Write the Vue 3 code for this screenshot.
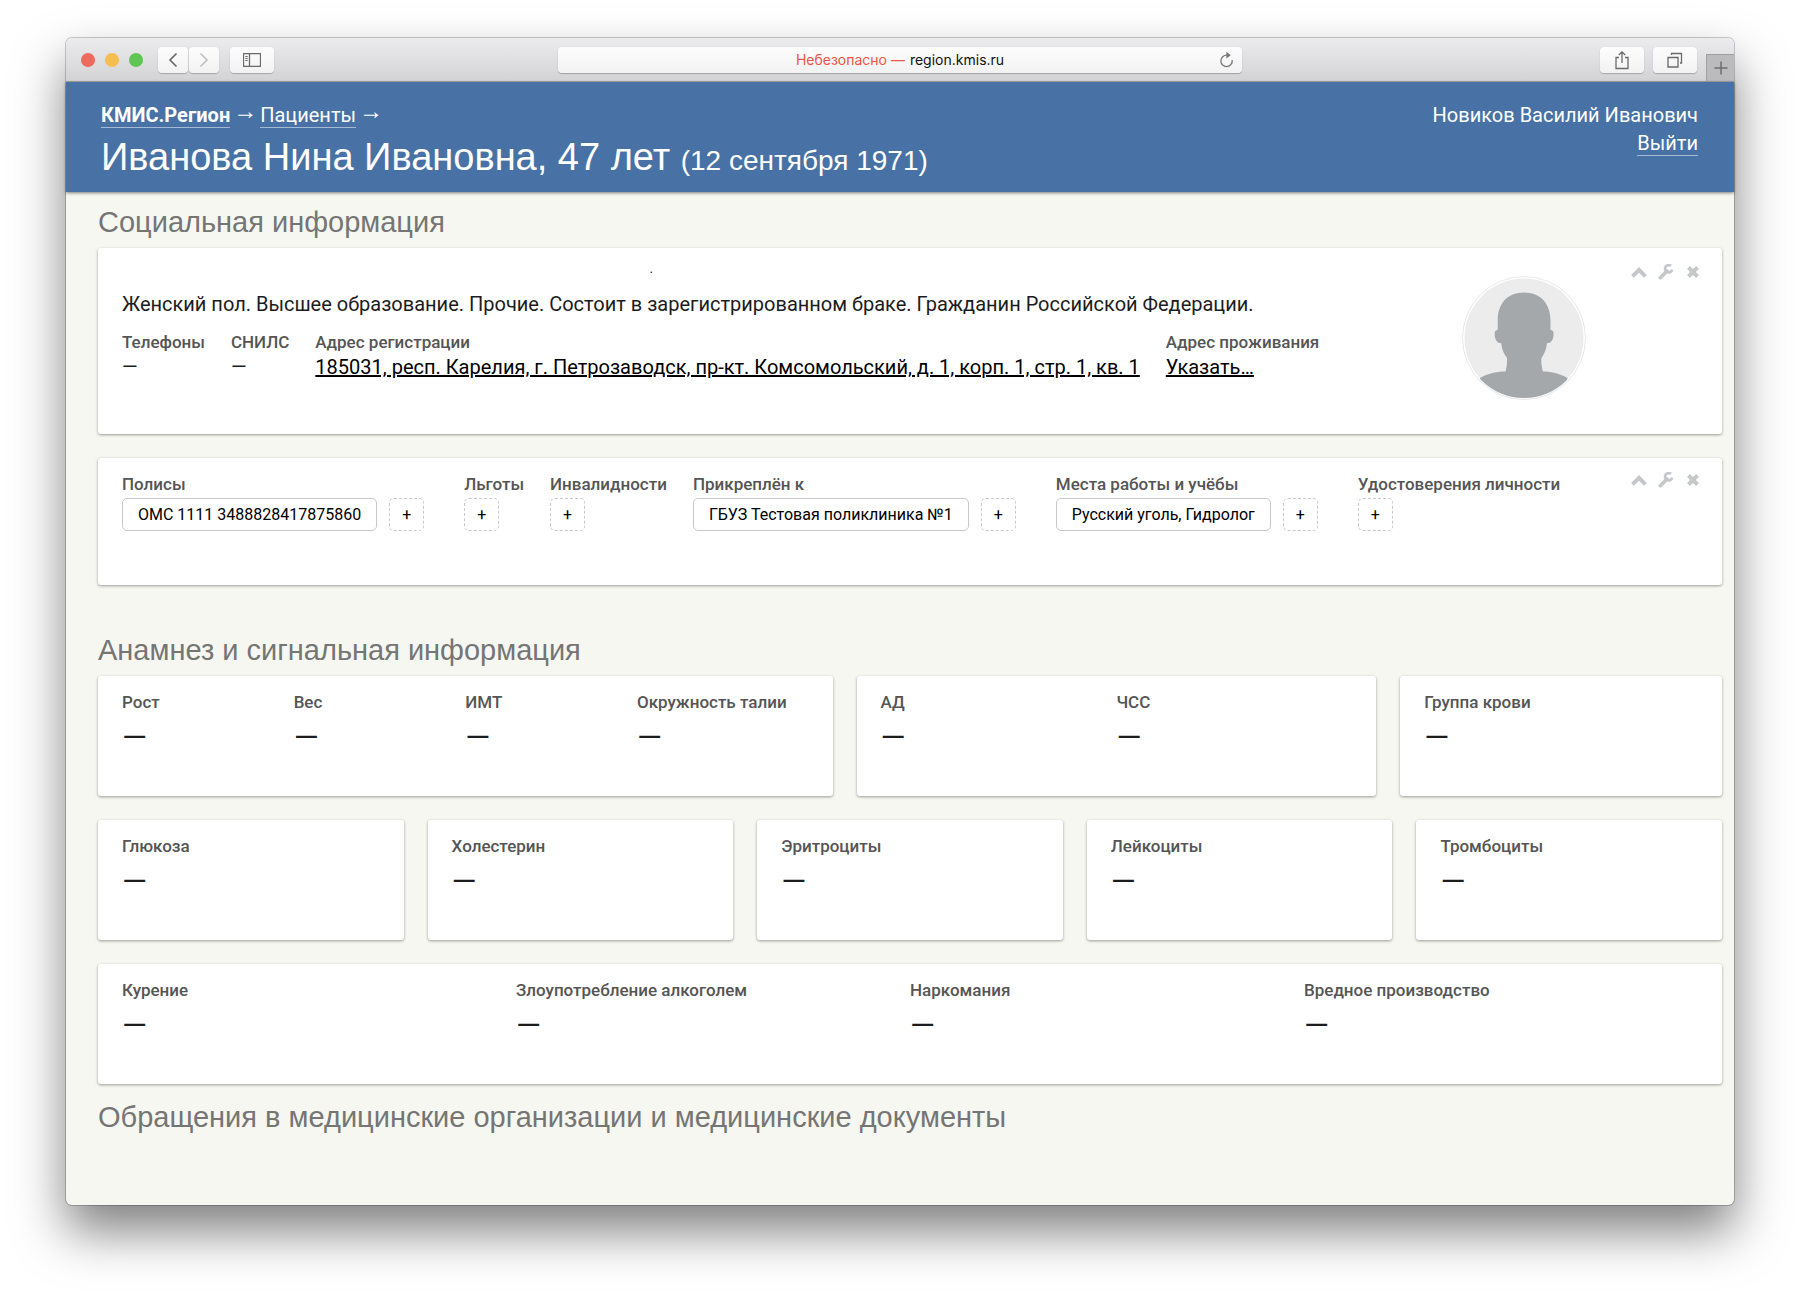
<script setup>
const personal = [
  { label: 'Телефоны', value: '—' },
  { label: 'СНИЛС', value: '—' },
  { label: 'Адрес регистрации', link: '185031, респ. Карелия, г. Петрозаводск, пр-кт. Комсомольский, д. 1, корп. 1, стр. 1, кв. 1' },
  { label: 'Адрес проживания', link: 'Указать…' },
]

const documents = [
  { label: 'Полисы', items: ['ОМС 1111 3488828417875860'] },
  { label: 'Льготы', items: [] },
  { label: 'Инвалидности', items: [] },
  { label: 'Прикреплён к', items: ['ГБУЗ Тестовая поликлиника №1'] },
  { label: 'Места работы и учёбы', items: ['Русский уголь, Гидролог'] },
  { label: 'Удостоверения личности', items: [] },
]

const metricRows = [
  { name: 'body', cards: [['Рост', 'Вес', 'ИМТ', 'Окружность талии'], ['АД', 'ЧСС'], ['Группа крови']] },
  { name: 'blood', cards: [['Глюкоза'], ['Холестерин'], ['Эритроциты'], ['Лейкоциты'], ['Тромбоциты']] },
  { name: 'habits', cards: [['Курение', 'Злоупотребление алкоголем', 'Наркомания', 'Вредное производство']] },
]

const tools = [
  { name: 'Свернуть', path: 'M1.500 12.300 8 5.800l6.500 6.500' },
  { name: 'Настроить', wrench: true },
  { name: 'Закрыть', path: 'M3.500 3.500l9 9M12.500 3.500l-9 9' },
]
</script>

<template>
  <div class="desktop">
    <div class="window">
      <div class="toolbar">
        <div class="bar-left">
          <div class="lights">
            <span class="light red"></span>
            <span class="light yellow"></span>
            <span class="light green"></span>
          </div>
          <div class="nav">
            <button class="tb narrow" aria-label="Назад">
              <svg width="12" height="16" viewBox="0 0 12 16"><path d="M9.500 1.500 3 8l6.500 6.500" fill="none" stroke="#666" stroke-width="1.600" /></svg>
            </button>
            <button class="tb narrow" aria-label="Вперёд">
              <svg width="12" height="16" viewBox="0 0 12 16"><path d="M2.500 1.500 9 8l-6.500 6.500" fill="none" stroke="#c0c0c0" stroke-width="1.600" /></svg>
            </button>
          </div>
          <button class="tb" aria-label="Боковое меню">
            <svg width="18" height="14" viewBox="0 0 18 14" fill="none" stroke="#6a6a6a">
              <path d="M.5 .5h17v13H.5zM6.500 .5v13" stroke-width="1.300" />
              <path d="M2.300 3.500h2.400M2.300 5.500h2.400M2.300 7.500h2.400" stroke-width="1" />
            </svg>
          </button>
        </div>
        <div class="address">
          <label class="url">
            <span class="warn">Небезопасно —</span>
            <input class="url-input" type="text" value="region.kmis.ru" size="12" />
          </label>
          <button class="reload" aria-label="Обновить">
            <svg width="16" height="18" viewBox="0 0 16 18">
              <path d="M8 4.200A5.700 5.700 0 1 0 13.200 9" fill="none" stroke="#777" stroke-width="1.300" />
              <path d="M7.400 .8 11.800 4.200 7.400 7.400z" fill="#777" />
            </svg>
          </button>
        </div>
        <div class="bar-right">
          <button class="tb" aria-label="Поделиться">
            <svg width="16" height="20" viewBox="0 0 16 20" fill="none" stroke="#6a6a6a" stroke-width="1.300">
              <path d="M5 7.500H2v11h12v-11h-3M8 13V2M4.800 5 8 1.800 11.200 5" />
            </svg>
          </button>
          <button class="tb" aria-label="Показать вкладки">
            <svg width="18" height="18" viewBox="0 0 18 18" fill="none" stroke="#6a6a6a" stroke-width="1.300">
              <path d="M2 6.500h10v9.500H2zM5.500 4V2.500h10V12H14" />
            </svg>
          </button>
          <button class="new-tab" aria-label="Новая вкладка">
            <svg width="14" height="14" viewBox="0 0 14 14"><path d="M7 .5v13M.5 7h13" stroke="#6e6e6e" stroke-width="1.500" /></svg>
          </button>
        </div>
      </div>

      <header class="header">
        <div>
          <nav class="crumbs">
            <a href="#" class="home">КМИС.Регион</a>
            <span class="arrow">→</span>
            <a href="#">Пациенты</a>
            <span class="arrow">→</span>
          </nav>
          <h1>Иванова Нина Ивановна, 47 лет <small>(12 сентября 1971)</small></h1>
        </div>
        <div class="user">
          <div>Новиков Василий Иванович</div>
          <a href="#">Выйти</a>
        </div>
      </header>

      <main class="content">
        <h2>Социальная информация</h2>
        <section class="card person">
          <div class="person-main">
            <div class="dot">.</div>
            <p>Женский пол. Высшее образование. Прочие. Состоит в зарегистрированном браке. Гражданин Российской Федерации.</p>
            <div class="fields">
              <div v-for="f in personal" :key="f.label">
                <div class="label">{{ f.label }}</div>
                <a v-if="f.link" href="#" class="value link">{{ f.link }}</a>
                <div v-else class="value">{{ f.value }}</div>
              </div>
            </div>
          </div>
          <svg class="avatar" width="124" height="124" viewBox="0 0 124 124">
            <defs><clipPath id="face"><circle cx="62" cy="62" r="60" /></clipPath></defs>
            <circle cx="62" cy="62" r="61.500" fill="#fff" stroke="#e6e8ea" />
            <circle cx="62" cy="62" r="59.500" fill="#ececec" />
            <path clip-path="url(#face)" fill="#a4a8ab" d="M62 16.500c17 0 26.500 11.500 26.500 28v9.500c2.500 0 3.500 2 3 5.500-.5 4.500-2.500 8-6.500 7.500-.5 6-2.500 10.500-5.500 15 -.500 4.500 .200 9 1.500 13.500 9 0 17.500 2.500 24.500 6.500V124H18V102c7-4 15.500-6.500 25.500-6.500 1.300-4.500 1.800-9 1.500-13.500-3.500-4.500-5.300-9-5.800-15-4 .5-6-3-6.500-7.500-.4-3.500 .500-5.500 3-5.500V44.500c0-16.500 9.300-28 26.300-28z" />
          </svg>
          <div class="tools">
            <button v-for="t in tools" :key="t.name" :aria-label="t.name">
              <svg width="16" height="16" viewBox="0 0 16 16">
                <path v-if="t.path" :d="t.path" fill="none" stroke="#c5c7cb" stroke-width="4" />
                <path v-else d="M2.300 13.700 9 7" stroke="#c5c7cb" stroke-width="3.600" stroke-linecap="round" />
                <path v-if="t.wrench" d="M13 1.900 A3.600 3.600 0 1 0 14.200 5.600" fill="none" stroke="#c5c7cb" stroke-width="2.800" />
              </svg>
            </button>
          </div>
        </section>

        <section class="card documents">
          <div class="fields">
            <div v-for="d in documents" :key="d.label">
              <div class="label">{{ d.label }}</div>
              <div class="chips">
                <button v-for="i in d.items" :key="i" class="chip">{{ i }}</button>
                <button class="chip add">+</button>
              </div>
            </div>
          </div>
          <div class="tools">
            <button v-for="t in tools" :key="t.name" :aria-label="t.name">
              <svg width="16" height="16" viewBox="0 0 16 16">
                <path v-if="t.path" :d="t.path" fill="none" stroke="#c5c7cb" stroke-width="4" />
                <path v-else d="M2.300 13.700 9 7" stroke="#c5c7cb" stroke-width="3.600" stroke-linecap="round" />
                <path v-if="t.wrench" d="M13 1.900 A3.600 3.600 0 1 0 14.200 5.600" fill="none" stroke="#c5c7cb" stroke-width="2.800" />
              </svg>
            </button>
          </div>
        </section>

        <h2 class="spaced">Анамнез и сигнальная информация</h2>
        <div v-for="row in metricRows" :key="row.name" class="row" :class="row.name">
          <section v-for="card in row.cards" :key="card[0]" class="card metrics">
            <div v-for="m in card" :key="m" class="metric">
              <div class="label">{{ m }}</div>
              <div class="big">—</div>
            </div>
          </section>
        </div>

        <h2 class="last">Обращения в медицинские организации и медицинские документы</h2>
      </main>
    </div>
  </div>
</template>

<style>
body { margin: 0; background: #fff; }
</style>

<style scoped>
* { box-sizing: border-box; }
button { font: inherit; color: inherit; border: 0; padding: 0; margin: 0; background: none; cursor: pointer; }
svg { display: block; }

.desktop {
  min-height: 100vh;
  padding: 38px 66px 95px;
  display: flex;
  overflow: hidden;
  font: 20px/28px Roboto, "Liberation Sans", sans-serif;
  color: #1c1c1c;
}
.window {
  flex: 1;
  min-width: 0;
  display: flex;
  flex-direction: column;
  background: #f6f7f1;
  border-radius: 6px;
  box-shadow: 0 0 0 1px rgba(0, 0, 0, .2), 0 26px 50px rgba(0, 0, 0, .5);
}

/* browser toolbar */
.toolbar {
  display: grid;
  grid-template-columns: 1fr 41% 1fr;
  align-items: center;
  height: 44px;
  border-bottom: 1px solid #a5a5a0;
  border-radius: 6px 6px 0 0;
  background: linear-gradient(#ececee, #d3d3d5);
  overflow: hidden;
}
.bar-left { display: flex; align-items: center; gap: 11px; padding-left: 15px; }
.lights { display: flex; gap: 10px; margin-right: 4px; }
.light { width: 14px; height: 14px; border-radius: 50%; }
.red { background: #ed6a5e; }
.yellow { background: #f5bf4f; }
.green { background: #61c554; }
.nav { display: flex; gap: 1px; }
.tb {
  display: grid;
  place-items: center;
  width: 44px;
  height: 26px;
  border-radius: 4px;
  background: linear-gradient(#fdfdfd, #f2f2f2);
  box-shadow: 0 1px 1px rgba(0, 0, 0, .22), 0 0 1px rgba(0, 0, 0, .15);
}
.tb.narrow { width: 30px; }
.address {
  display: flex;
  align-items: center;
  height: 26px;
  padding: 1px 7px 0 23px;
  border-radius: 4px;
  background: linear-gradient(#fdfdfd, #f2f2f2);
  box-shadow: 0 1px 1px rgba(0, 0, 0, .25), 0 0 1px rgba(0, 0, 0, .15);
}
.url { flex: 1; display: flex; justify-content: center; gap: 5px; font: 14px/20px Inter, sans-serif; }
.warn { color: #ee5544; }
.url-input { field-sizing: content; border: 0; padding: 0; background: none; font: inherit; color: #111; }
.bar-right { display: flex; align-items: center; justify-content: flex-end; gap: 9px; }
.new-tab {
  display: grid;
  place-items: center;
  align-self: flex-end;
  width: 28px;
  height: 27px;
  margin-top: 16px;
  border: 1px solid #a0a0a2;
  border-width: 1px 0 0 1px;
  background: #bbbbbd;
}

/* page header */
.header {
  display: flex;
  justify-content: space-between;
  padding: 19px 36px 13px 35px;
  background: #4872a5;
  color: #fff;
  box-shadow: 0 1px 3px rgba(0, 0, 0, .5);
}
.header a { color: inherit; text-decoration: none; border-bottom: 1px solid rgba(255, 255, 255, .5); }
.crumbs { display: flex; align-items: center; gap: 3px; height: 28px; }
.crumbs a { line-height: 24px; }
.home { font-weight: 700; }
.arrow { align-self: flex-start; font: 24px/20px "Liberation Sans", sans-serif; }
h1 { margin: 6px 0 0; font: 38px/44px "Liberation Sans", sans-serif; }
h1 small { font-size: 28px; line-height: 28px; }
.user { text-align: right; }

/* content */
.content { padding: 0 12px 40px 32px; }
h2 { margin: 12px 0 8px; font: 29px/36px "Liberation Sans", sans-serif; color: #757575; }
h2.spaced { margin-top: 47px; }
h2.last { margin-top: 15px; }
.card { background: #fff; border-radius: 3px; box-shadow: 0 1px 3px rgba(0, 0, 0, .38); }
.label { font-size: 17px; line-height: 24px; font-weight: 500; color: #555; white-space: nowrap; }
.fields { display: flex; gap: 26px; }
.person { display: flex; padding: 16px 24px 0; margin-bottom: 24px; }
.person-main { flex: 1; padding-bottom: 54px; }
.person p { margin: 0 0 12px; }
.dot { width: 79%; height: 26px; text-align: center; font-size: 14px; line-height: 8px; }
.value { line-height: 26px; white-space: nowrap; display: block; }
.link { color: #000; text-decoration: underline; }
.avatar { flex: none; margin: 12px 45px 0 0; }
.tools { display: flex; flex: none; align-self: flex-start; gap: 11px; width: 67px; }
.documents { display: flex; justify-content: space-between; padding: 14px 24px 54px; }
.chips { display: flex; gap: 12px; padding: 2px 14px 0 0; }
.chip {
  height: 33px;
  padding: 0 15px;
  border: 1px solid #c8c8c8;
  border-radius: 5px;
  font-size: 16px;
  line-height: 24px;
  color: #000;
  white-space: nowrap;
}
.chip.add { width: 35px; padding: 0; border-style: dashed; }
.row { display: grid; gap: 24px; margin-bottom: 24px; }
.body { grid-template-columns: 735fr 520fr 322fr; }
.blood { grid-template-columns: repeat(5, 1fr); }
.habits { margin-bottom: 0; }
.metrics { display: flex; padding: 14px 24px 36px; }
.metric { flex: 1 1 0; min-width: 0; }
.big { font-size: 32px; line-height: 46px; }
</style>
